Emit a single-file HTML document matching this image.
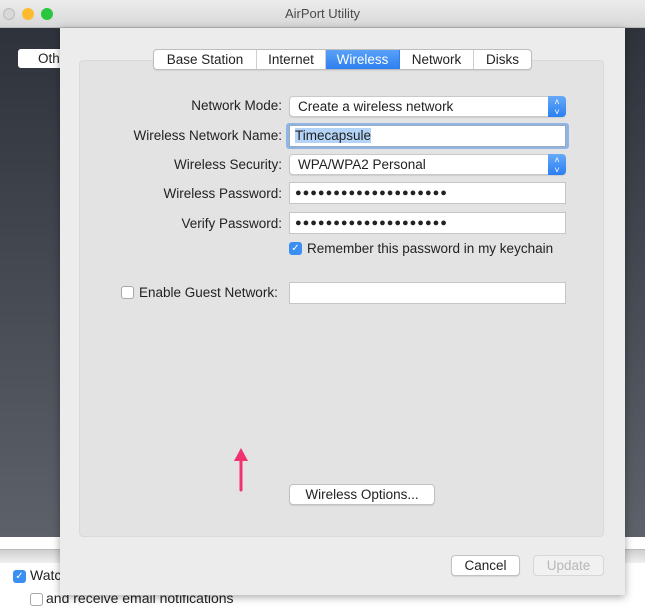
<!DOCTYPE html>
<html><head><meta charset="utf-8"><style>
*{box-sizing:border-box;margin:0;padding:0}
body{width:645px;height:604px;overflow:hidden;position:relative;font-family:"Liberation Sans",sans-serif;font-size:13.5px;color:#222;background:#fff}
.abs{position:absolute}
.title{left:0;top:0;width:645px;height:28px;background:linear-gradient(#ececec,#d8d8d8);border-bottom:1px solid #b8b8b8;text-align:center;line-height:28px;font-size:13px;color:#4a4a4a}
.dot{width:12px;height:12px;border-radius:50%;top:8px}
.dark{left:0;top:28px;width:645px;height:509px;background:linear-gradient(#2e333b,#5d6169)}
.sheet{left:60px;top:28px;width:565px;height:567px;background:#ececec;box-shadow:0 2px 8px rgba(0,0,0,.35)}
.inner{left:79px;top:60px;width:525px;height:477px;background:#e3e3e3;border:1px solid #dadada;border-radius:4px}
.tabs{left:153px;top:49px;height:21px;display:flex;background:#fff;border:1px solid #bdbdbd;border-radius:4px;overflow:hidden;box-shadow:0 1px 1px rgba(0,0,0,.08)}
.tabs div{height:19px;line-height:19px;text-align:center;border-right:1px solid #cfcfcf;color:#222}
.tabs div:last-child{border-right:none}
.lbl{text-align:right;width:220px;left:62px;color:#222}
.pop{left:289px;width:277px;height:21px;background:#fff;border:1px solid #c9c9c9;border-radius:4px;padding-left:8px;line-height:19px;box-shadow:0 1px 1px rgba(0,0,0,.1)}
.pop .st{position:absolute;right:-1px;top:-1px;width:18px;height:21px;background:linear-gradient(#66a9f7,#2a7ff2);border-radius:0 4px 4px 0;color:#fff;font-size:9px;text-align:center;line-height:10px;padding-top:1px}
.fld{left:289px;width:277px;height:22px;background:#fff;border:1px solid #c6c6c6;padding-left:5px;line-height:20px}
.pw{font-size:11px;letter-spacing:1px}
.cb{width:13px;height:13px;border-radius:3px}
.on{background:#3b8ff3;color:#fff;font-size:10px;text-align:center;line-height:13px}
.off{background:#fff;border:1px solid #a8a8a8}
.btn{background:#fff;border:1px solid #c2c2c2;border-radius:4px;text-align:center;line-height:19px;height:21px;box-shadow:0 1px 1px rgba(0,0,0,.1)}
</style></head><body>
<div class="abs title">AirPort Utility</div>
<div class="abs dot" style="left:3px;background:#d8d8d8;border:1px solid #bdbdbd"></div>
<div class="abs dot" style="left:22px;background:#fdbc2f"></div>
<div class="abs dot" style="left:41px;background:#2bc63f"></div>
<div class="abs dark"></div>
<div class="abs" style="left:18px;top:49px;width:50px;height:19px;background:#fff;border-radius:3px;line-height:19px;padding-left:20px">Oth</div>
<div class="abs" style="left:0;top:537px;width:645px;height:12px;background:#fff"></div>
<div class="abs" style="left:0;top:549px;width:645px;height:14px;background:linear-gradient(#cfcfcf,#f0f0f0);border-top:1px solid #bbb"></div>
<div class="abs cb on" style="left:13px;top:570px">✓</div>
<div class="abs" style="left:30px;top:567px;font-size:14px">Watch</div>
<div class="abs cb off" style="left:30px;top:593px"></div>
<div class="abs" style="left:46px;top:590px;font-size:14px">and receive email notifications</div>
<div class="abs sheet"></div>
<div class="abs inner"></div>
<div class="abs tabs">
<div style="width:103px">Base Station</div>
<div style="width:69px">Internet</div>
<div style="width:74px;background:linear-gradient(#5aa1f7,#2d7ff0);color:#fff;border-right-color:#2d7ff0">Wireless</div>
<div style="width:74px">Network</div>
<div style="width:57px">Disks</div>
</div>
<div class="abs lbl" style="top:98px">Network Mode:</div>
<div class="abs pop" style="top:96px">Create a wireless network<div class="st">˄<br>˅</div></div>
<div class="abs lbl" style="top:128px">Wireless Network Name:</div>
<div class="abs" style="left:286px;top:123px;width:283px;height:26px;border:3px solid #8fb5e8;border-radius:3px"></div>
<div class="abs fld" style="top:125px;height:22px;border-color:#9ab"><span style="background:#b3d3f7">Timecapsule</span></div>
<div class="abs lbl" style="top:157px">Wireless Security:</div>
<div class="abs pop" style="top:154px">WPA/WPA2 Personal<div class="st">˄<br>˅</div></div>
<div class="abs lbl" style="top:186px">Wireless Password:</div>
<div class="abs fld pw" style="top:182px">●●●●●●●●●●●●●●●●●●●●</div>
<div class="abs lbl" style="top:216px">Verify Password:</div>
<div class="abs fld pw" style="top:212px">●●●●●●●●●●●●●●●●●●●●</div>
<div class="abs cb on" style="left:289px;top:242px">✓</div>
<div class="abs" style="left:307px;top:241px">Remember this password in my keychain</div>
<div class="abs cb off" style="left:121px;top:286px"></div>
<div class="abs" style="left:139px;top:285px">Enable Guest Network:</div>
<div class="abs fld" style="top:282px"></div>
<div class="abs btn" style="left:289px;top:484px;width:146px">Wireless Options...</div>
<svg class="abs" style="left:232px;top:446px" width="18" height="46"><path d="M9 44 L9 10" stroke="#f0326e" stroke-width="3" stroke-linecap="round"/><path d="M2 15 L9 2 L16 15 Z" fill="#f0326e"/></svg>
<div class="abs btn" style="left:451px;top:555px;width:69px">Cancel</div>
<div class="abs btn" style="left:533px;top:555px;width:71px;color:#b8b8b8;background:#f1f1f1;border-color:#d6d6d6;box-shadow:none">Update</div>
</body></html>
